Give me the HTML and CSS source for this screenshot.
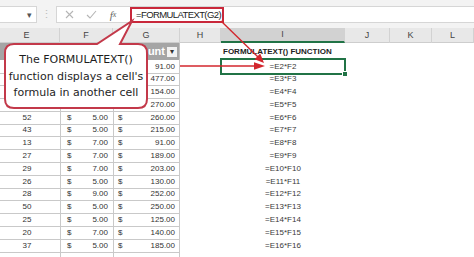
FILE: index.html
```html
<!DOCTYPE html>
<html lang="en">
<head>
    <meta charset="UTF-8">
    <meta name="viewport" content="width=device-width, initial-scale=1.0">
    <title>FORMULATEXT</title>
    <link rel="stylesheet" href="styles.css">
</head>
<body>
    <div class="sheet">
        <!-- barra de fórmulas -->
        <div class="toolbar">
            <div class="namebox"><span class="caret">&#9662;</span></div>
            <div class="grip">&#8942;</div>
            <div class="fbar">
                <span class="ico">
                    <svg width="9" height="9" viewBox="0 0 9 9"><path d="M1 1 L8 8 M8 1 L1 8" stroke="#b5b5b5" stroke-width="1.1" fill="none"/></svg>
                </span>
                <span class="ico">
                    <svg width="11" height="9" viewBox="0 0 11 9"><path d="M1 5 L4 8 L10 1" stroke="#b5b5b5" stroke-width="1.1" fill="none"/></svg>
                </span>
                <span class="ico fx">f<small>x</small></span>
                <span class="formula">=FORMULATEXT(G2)</span>
            </div>
        </div>

        <!-- cabeçalho das colunas -->
        <div class="row heads">
            <div class="h first">E</div>
            <div class="h">F</div>
            <div class="h">G</div>
            <div class="h">H</div>
            <div class="h on">I</div>
            <div class="h">J</div>
            <div class="h">K</div>
            <div class="h">L</div>
        </div>

        <div class="row top">
            <div class="th"></div>
            <div class="th"></div>
            <div class="th"><span class="clip">unt</span><span class="filter">&#9662;</span></div>
            <div></div>
            <div class="title">FORMULATEXT() FUNCTION</div>
        </div>

        <!-- linhas 2 a 5: E e F ficam debaixo do balão -->
        <div class="row"><div class="c e"></div><div class="c f"></div><div class="c g"><span></span>91.00</div><div></div><div class="c i sel">=E2*F2</div></div>
        <div class="row"><div class="c e"></div><div class="c f"></div><div class="c g"><span></span>477.00</div><div></div><div class="c i">=E3*F3</div></div>
        <div class="row"><div class="c e"></div><div class="c f"></div><div class="c g"><span></span>154.00</div><div></div><div class="c i">=E4*F4</div></div>
        <div class="row"><div class="c e"></div><div class="c f"></div><div class="c g"><span></span>270.00</div><div></div><div class="c i">=E5*F5</div></div>
        <div class="row"><div class="c e">52</div><div class="c f"><span>$</span>5.00</div><div class="c g"><span>$</span>260.00</div><div></div><div class="c i">=E6*F6</div></div>
        <div class="row"><div class="c e">43</div><div class="c f"><span>$</span>5.00</div><div class="c g"><span>$</span>215.00</div><div></div><div class="c i">=E7*F7</div></div>
        <div class="row"><div class="c e">13</div><div class="c f"><span>$</span>7.00</div><div class="c g"><span>$</span>91.00</div><div></div><div class="c i">=E8*F8</div></div>
        <div class="row"><div class="c e">27</div><div class="c f"><span>$</span>7.00</div><div class="c g"><span>$</span>189.00</div><div></div><div class="c i">=E9*F9</div></div>
        <div class="row"><div class="c e">29</div><div class="c f"><span>$</span>7.00</div><div class="c g"><span>$</span>203.00</div><div></div><div class="c i">=E10*F10</div></div>
        <div class="row"><div class="c e">26</div><div class="c f"><span>$</span>5.00</div><div class="c g"><span>$</span>130.00</div><div></div><div class="c i">=E11*F11</div></div>
        <div class="row"><div class="c e">28</div><div class="c f"><span>$</span>9.00</div><div class="c g"><span>$</span>252.00</div><div></div><div class="c i">=E12*F12</div></div>
        <div class="row"><div class="c e">50</div><div class="c f"><span>$</span>5.00</div><div class="c g"><span>$</span>250.00</div><div></div><div class="c i">=E13*F13</div></div>
        <div class="row"><div class="c e">25</div><div class="c f"><span>$</span>5.00</div><div class="c g"><span>$</span>125.00</div><div></div><div class="c i">=E14*F14</div></div>
        <div class="row"><div class="c e">20</div><div class="c f"><span>$</span>7.00</div><div class="c g"><span>$</span>140.00</div><div></div><div class="c i">=E15*F15</div></div>
        <div class="row"><div class="c e">37</div><div class="c f"><span>$</span>5.00</div><div class="c g"><span>$</span>185.00</div><div></div><div class="c i">=E16*F16</div></div>
        <div class="row"><div class="c e"></div><div class="c f"></div><div class="c g"></div><div></div><div class="c i"></div></div>

        <!-- balão e setas por cima da planilha -->
        <svg class="notes" width="474" height="257" viewBox="0 0 474 257">
            <path d="M14 44 H97 L132 21 L120 44 H138 Q147 44 147 53 V99 Q147 108 138 108 H14 Q5 108 5 99 V53 Q5 44 14 44 Z" fill="#fff" stroke="#c3394a" stroke-width="2"/>
            <line x1="221" y1="21" x2="258" y2="57" stroke="#d3262d" stroke-width="1.4"/>
            <polygon points="264,63 254.6,59.2 260.2,53.6" fill="#d3262d"/>
            <line x1="180" y1="66" x2="256" y2="66" stroke="#d3262d" stroke-width="1.4"/>
            <polygon points="265,66 254,62.3 254,69.7" fill="#d3262d"/>
        </svg>
        <div class="callout">The FORMULATEXT()<br>function displays a cell's<br>formula in another cell</div>
    </div>
</body>
</html>
```

FILE: styles.css
```css
body {
    margin: 0;
    font-family: "Liberation Sans", Arial, sans-serif;
    background-color: #ffffff;
}

.sheet {
    position: relative;
    width: 474px;
    height: 257px;
    overflow: hidden;
    background-color: #ffffff;
}

/* barra de fórmulas */
.toolbar {
    height: 28px;
    background-color: #f3f3f3;
    display: flex;
    align-items: flex-start;
    padding-top: 6px;
    box-sizing: border-box;
}

.namebox {
    width: 37px;
    height: 17px;
    background-color: #fff;
    border: 1px solid #d6d6d6;
    border-left: none;
    box-sizing: border-box;
    display: flex;
    justify-content: flex-end;
    align-items: center;
    padding-right: 4px;
}

.caret {
    font-size: 9px;
    color: #555;
}

.grip {
    width: 19px;
    height: 17px;
    text-align: center;
    color: #bdbdbd;
    font-size: 11px;
    line-height: 17px;
}

.fbar {
    flex: 1;
    height: 17px;
    background-color: #fff;
    border: 1px solid #d6d6d6;
    border-right: none;
    box-sizing: border-box;
    display: flex;
    align-items: center;
    padding-left: 1px;
}

.ico {
    width: 22px;
    display: flex;
    justify-content: center;
    align-items: center;
}

.fx {
    font-family: "Liberation Serif", serif;
    font-style: italic;
    font-size: 11px;
    color: #666;
}

.fx small {
    font-size: 8px;
}

.formula {
    margin-left: 6px;
    width: 94px;
    height: 16px;
    border: 2px solid #c9283b;
    box-sizing: border-box;
    font-size: 9.5px;
    letter-spacing: -0.6px;
    line-height: 12px;
    padding-left: 4px;
    color: #222;
}

/* grade */
.row {
    display: grid;
    grid-template-columns: 60px 53px 67px 41px 124px 45px 42px 42px;
    height: 12.8px;
}

.heads {
    height: 15px;
    background-color: #e8e8e8;
    border-bottom: 1px solid #cdcdcd;
    box-sizing: border-box;
}

.h {
    border-right: 1px solid #d2d2d2;
    text-align: center;
    font-size: 9px;
    line-height: 14px;
    color: #444;
}

.h.first {
    padding-right: 6px;
}

.h.on {
    background-color: #d2d2d2;
    border-bottom: 2px solid #217346;
    line-height: 13px;
}

.row.top {
    height: 16px;
}

.th {
    background-color: #a5a5a5;
    color: #fff;
    font-weight: bold;
    font-size: 11px;
    line-height: 15px;
    padding-right: 2px;
    border-right: 1px solid #bfbfbf;
    display: flex;
    justify-content: flex-end;
    align-items: center;
}

.filter {
    width: 10px;
    height: 10px;
    margin-left: 2px;
    background-color: #f2f2f2;
    color: #333;
    font-size: 8px;
    line-height: 10px;
    text-align: center;
    font-weight: normal;
}

.title {
    font-weight: bold;
    font-size: 8px;
    line-height: 17px;
    padding-left: 2px;
    color: #222;
    white-space: nowrap;
}

.c {
    font-size: 8px;
    line-height: 12px;
    padding-top: 1.5px;
    color: #333;
    box-sizing: border-box;
    white-space: nowrap;
}

.e {
    text-align: center;
    padding-right: 6px;
    border-bottom: 1px solid #c9c9c9;
}

.f,
.g {
    display: flex;
    justify-content: space-between;
    border-left: 1px solid #c9c9c9;
    border-bottom: 1px solid #c9c9c9;
}

.f {
    padding-left: 6px;
    padding-right: 5px;
}

.g {
    padding-left: 4px;
    padding-right: 4px;
    border-right: 1px solid #c9c9c9;
}

.i {
    text-align: center;
    color: #3a3a3a;
}

.sel {
    position: relative;
    outline: 2px solid #217346;
    outline-offset: -1px;
}

.sel::after {
    content: "";
    position: absolute;
    right: -3px;
    bottom: -3px;
    width: 4px;
    height: 4px;
    background-color: #217346;
    border: 1px solid #fff;
}

/* balão */
.notes {
    position: absolute;
    left: 0;
    top: 0;
    pointer-events: none;
}

.callout {
    position: absolute;
    left: 5px;
    top: 44px;
    width: 142px;
    padding-top: 8px;
    text-align: center;
    font-family: "DejaVu Sans", sans-serif;
    font-size: 11px;
    line-height: 16.5px;
    color: #1e1e1e;
    white-space: nowrap;
}
```
